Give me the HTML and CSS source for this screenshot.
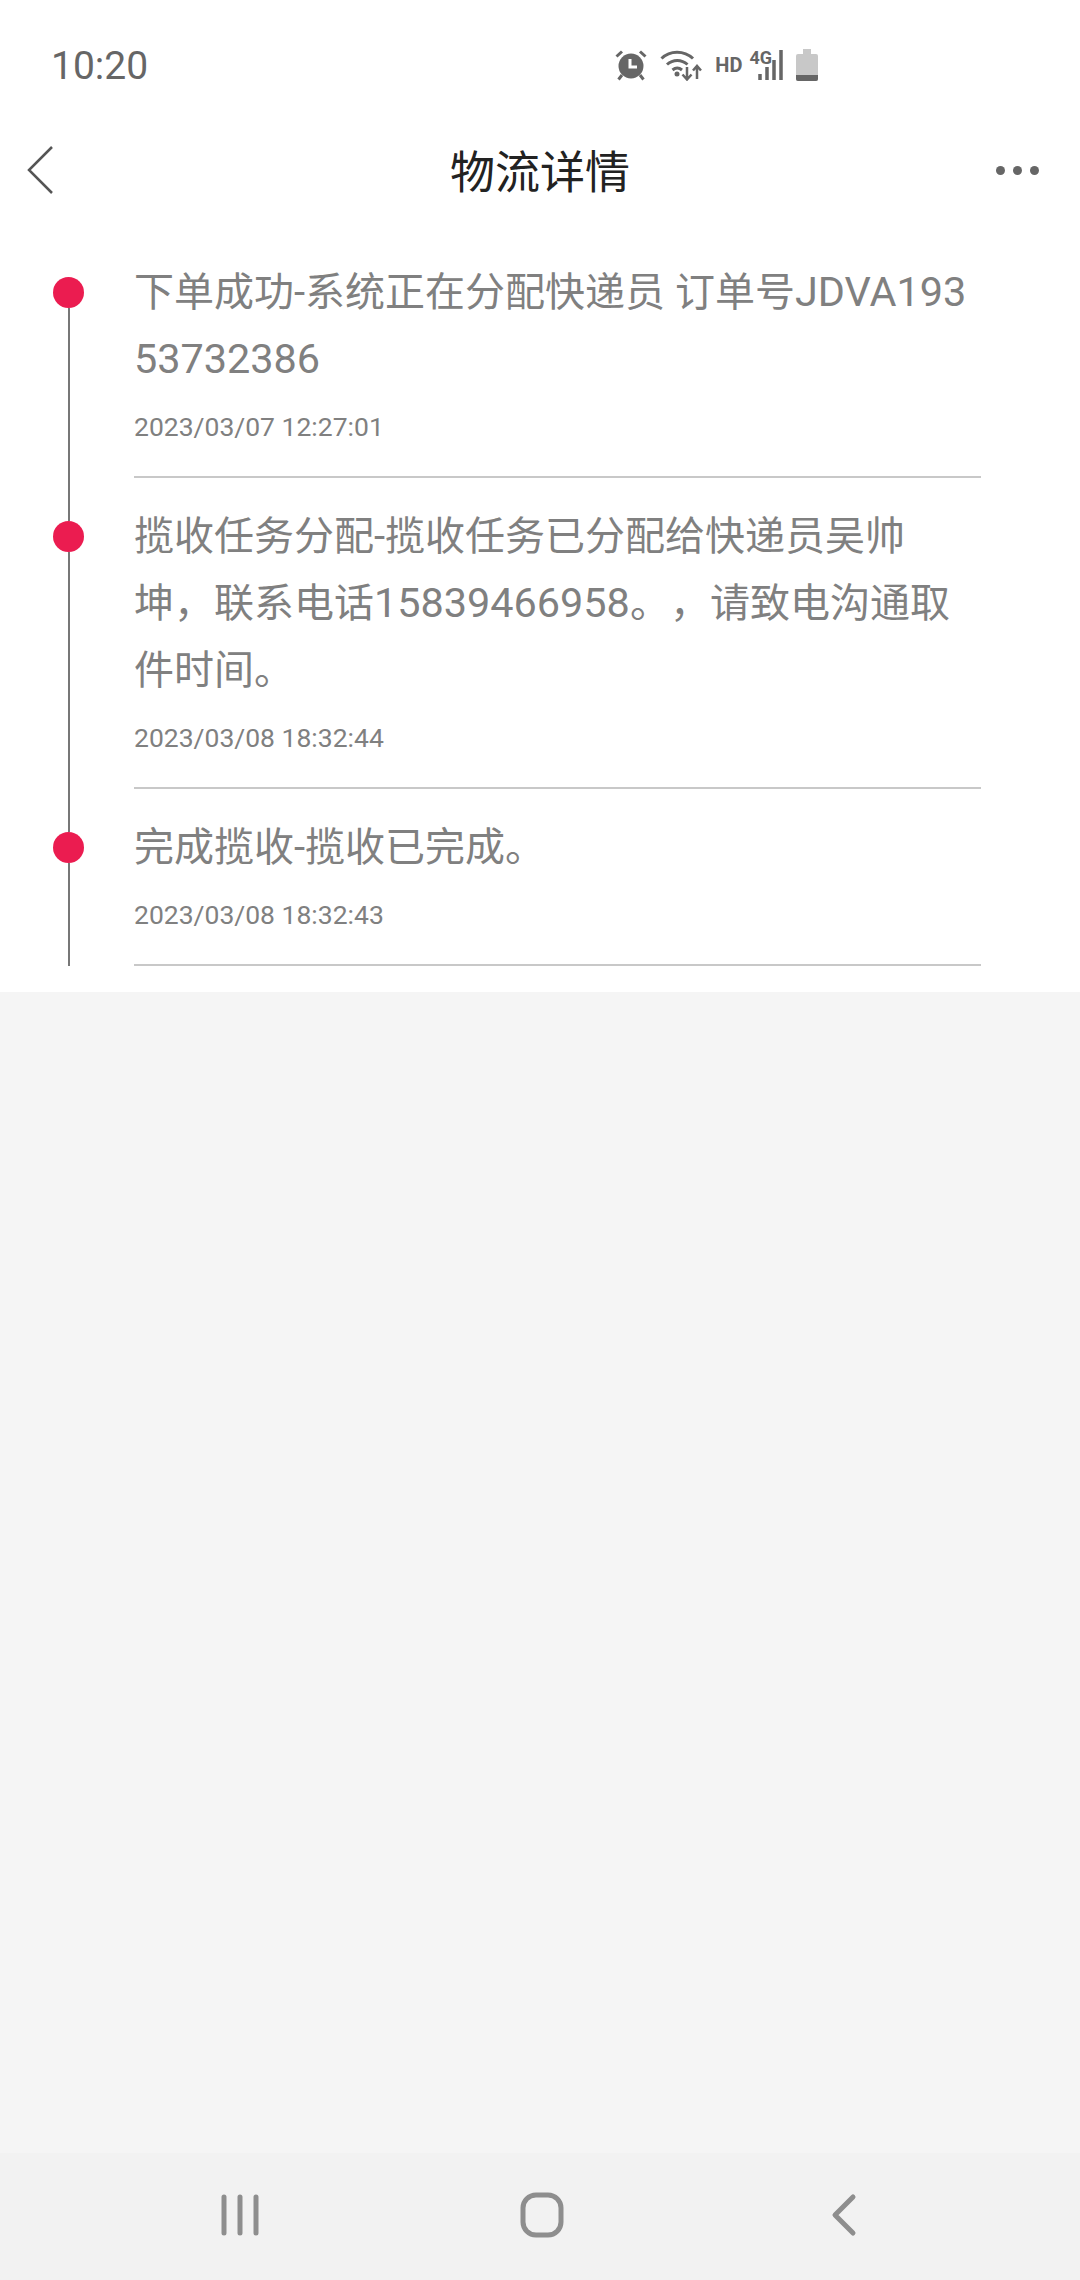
FILE: index.html
```html
<!DOCTYPE html>
<html lang="zh-CN">
  <head>
    <meta charset="UTF-8" />
    <meta name="viewport" content="width=device-width, initial-scale=1.0" />
    <title>物流详情</title>
    <link rel="stylesheet" href="styles.css">
  </head>
  <body>
    <div class="app">
      <!-- status bar -->
      <div class="status-bar">
        <span class="clock">10:20</span>
        <div class="status-icons">
          <svg class="ic-alarm" width="32" height="32" viewBox="0 0 32 32">
            <circle cx="16" cy="17" r="12.5" fill="#666"/>
            <path d="M1.5 7.5 7 2.5M30.5 7.5 25 2.5M7 26 3.5 30.5M25 26 28.5 30.5" stroke="#666" stroke-width="3" fill="none"/>
            <path d="M15 10v8h7" stroke="#fff" stroke-width="3" fill="none"/>
          </svg>
          <svg class="ic-wifi" width="42" height="32" viewBox="0 0 42 32">
            <path d="M1.5 9.5C10 1 24 1 33 9.5M7 15.5C13 10 21.5 10 27.5 15.5M12.5 21C15.5 18.5 19 18.5 22 21" stroke="#666" stroke-width="3" fill="none"/>
            <circle cx="17" cy="25" r="2.5" fill="#666"/>
            <path d="M27 18v12M22.5 25.5 27 30.5l4.5-5M37 30V17M33 21.5 37 17l4 4.5" stroke="#666" stroke-width="2.5" fill="none"/>
          </svg>
          <span class="hd">HD</span>
          <div class="net">
            <span class="net-label">4G</span>
            <svg width="28" height="30" viewBox="0 0 28 30">
              <path d="M3 30v-6M10 30V17M17 30V10M24 30V0" stroke="#666" stroke-width="3.5" fill="none"/>
            </svg>
          </div>
          <div class="battery">
            <div class="battery-nub"></div>
            <div class="battery-body"><div class="battery-level"></div></div>
          </div>
        </div>
      </div>

      <!-- title bar -->
      <div class="title-bar">
        <svg class="back" width="26" height="48" viewBox="0 0 26 48">
          <path d="M25 1 2 24l23 23" stroke="#555" stroke-width="2.5" fill="none"/>
        </svg>
        <h1 class="title">物流详情</h1>
        <div class="more"><i></i><i></i><i></i></div>
      </div>

      <!-- timeline -->
      <div class="timeline">
        <div class="row row-first">
          <div class="rail">
            <div class="stem-top"></div>
            <div class="dot"></div>
            <div class="stem"></div>
          </div>
          <div class="entry">
            <p class="entry-text">下单成功-系统正在分配快递员 订单号<span class="latin">JDVA193</span><br><span class="latin">53732386</span></p>
            <p class="entry-time">2023/03/07 12:27:01</p>
          </div>
        </div>
        <div class="row">
          <div class="rail">
            <div class="stem-top"></div>
            <div class="dot"></div>
            <div class="stem"></div>
          </div>
          <div class="entry">
            <p class="entry-text">揽收任务分配-揽收任务已分配给快递员吴帅<br>坤，联系电话<span class="latin">15839466958</span>。，请致电沟通取<br>件时间。</p>
            <p class="entry-time">2023/03/08 18:32:44</p>
          </div>
        </div>
        <div class="row">
          <div class="rail">
            <div class="stem-top"></div>
            <div class="dot"></div>
            <div class="stem"></div>
          </div>
          <div class="entry">
            <p class="entry-text">完成揽收-揽收已完成。</p>
            <p class="entry-time">2023/03/08 18:32:43</p>
          </div>
        </div>
      </div>

      <div class="empty"></div>

      <!-- system nav -->
      <div class="nav-bar">
        <svg width="44" height="44" viewBox="0 0 44 44">
          <path d="M6 4v36M22 4v36M38 4v36" stroke="#8e8e8e" stroke-width="5" stroke-linecap="round" fill="none"/>
        </svg>
        <svg width="44" height="46" viewBox="0 0 44 46">
          <rect x="3" y="3" width="38" height="40" rx="13" stroke="#8e8e8e" stroke-width="5" fill="none"/>
        </svg>
        <svg width="44" height="44" viewBox="0 0 44 44">
          <path d="M32 4 14 22l18 18" stroke="#8e8e8e" stroke-width="5" stroke-linecap="round" stroke-linejoin="round" fill="none"/>
        </svg>
      </div>
    </div>
  </body>
</html>
```

FILE: styles.css
```css
* {
  box-sizing: border-box;
}
body {
  margin: 0;
  font-family: Roboto, "Noto Sans CJK SC", sans-serif;
  background-color: #f5f5f5;
}
.app {
  display: flex;
  flex-direction: column;
  width: 1080px;
  height: 2280px;
}
.status-bar {
  display: flex;
  align-items: center;
  justify-content: space-between;
  height: 132px;
  padding: 0 262px 2px 51px;
  background-color: #fff;
}
.clock {
  margin-top: 2px;
  font-size: 39px;
  color: #666;
}
.status-icons {
  display: flex;
  align-items: center;
  color: #666;
}
.ic-wifi {
  margin-left: 13px;
}
.hd {
  margin-left: 13px;
  font-size: 20px;
  font-weight: 700;
}
.net {
  display: flex;
  align-items: flex-end;
  margin-left: 7px;
}
.net-label {
  align-self: flex-start;
  margin-right: -15px;
  font-size: 18px;
  font-weight: 700;
  line-height: 16px;
}
.battery {
  display: flex;
  flex-direction: column;
  align-items: center;
  width: 22px;
  margin-left: 11px;
}
.battery-nub {
  width: 8px;
  height: 5px;
  background-color: #c8c8c8;
}
.battery-body {
  display: flex;
  align-items: flex-end;
  width: 22px;
  height: 27px;
  border-radius: 2px;
  background-color: #c8c8c8;
  overflow: hidden;
}
.battery-level {
  width: 100%;
  height: 6px;
  background-color: #666;
}
.title-bar {
  display: grid;
  grid-template-columns: 1fr auto 1fr;
  align-items: center;
  height: 76px;
  padding: 0 27px;
  background-color: #fff;
}
.title {
  margin: 0 0 2px;
  font-size: 45px;
  font-weight: 400;
  color: #222;
}
.more {
  display: flex;
  justify-self: end;
  gap: 8px;
  margin-right: 14px;
}
.more i {
  width: 9px;
  height: 9px;
  border-radius: 50%;
  background-color: #666;
}
.timeline {
  padding: 26px 99px 26px 0;
  background-color: #fff;
}
.row {
  display: flex;
}
.rail {
  display: flex;
  flex-direction: column;
  align-items: center;
  width: 53px;
  margin-left: 42px;
  margin-right: 39px;
  flex-shrink: 0;
}
.stem-top {
  width: 2px;
  height: 43px;
  background-color: #777;
}
.row-first .stem-top {
  background-color: transparent;
}
.dot {
  width: 31px;
  height: 31px;
  border-radius: 50%;
  background-color: #eb1c50;
  flex-shrink: 0;
}
.stem {
  flex: 1;
  width: 2px;
  background-color: #777;
}
.entry {
  flex: 1;
  min-width: 0;
  padding-top: 25px;
  padding-bottom: 29px;
  border-bottom: 2px solid #c8c8c8;
}
.entry-text {
  margin: 0;
  font-size: 40px;
  line-height: 67px;
  color: #808080;
  text-spacing-trim: space-all;
}
.latin {
  font-size: 41.4px;
}
.entry-time {
  margin: 14px 0 0;
  font-size: 26.5px;
  line-height: 40px;
  color: #808080;
}
.empty {
  flex: 1;
}
.nav-bar {
  display: flex;
  align-items: center;
  justify-content: space-between;
  height: 127px;
  padding: 0 215px 3px 218px;
  background-color: #f2f2f2;
}
```
